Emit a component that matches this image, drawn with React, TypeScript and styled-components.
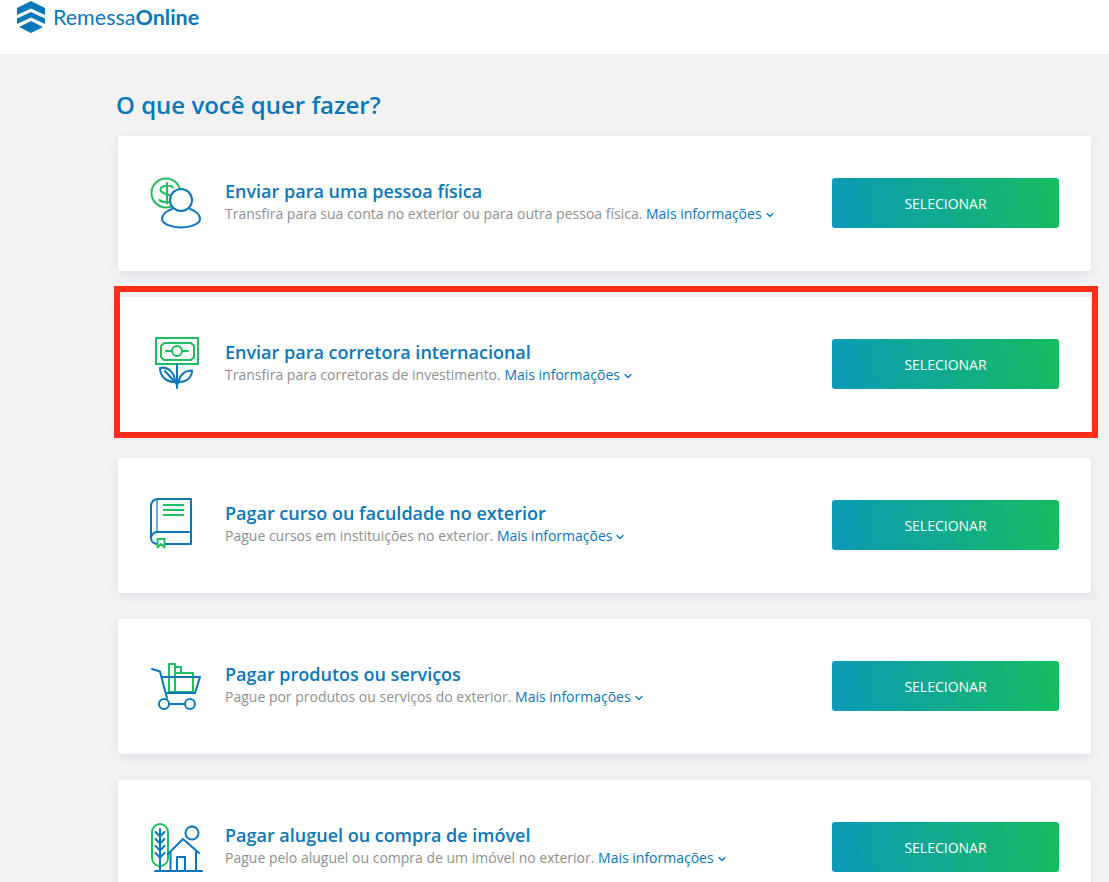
import { ReactNode } from 'react';
import styled, { createGlobalStyle } from 'styled-components';
import { ChevronDown } from 'lucide-react';

const BLUE = '#0a77b9';
const GREEN = '#1fbf5f';

const GlobalStyle = createGlobalStyle`
  html, body {
    margin: 0;
    padding: 0;
    height: 882px;
    overflow: hidden;
    background: #f2f2f3;
    font-family: "Open Sans", "Liberation Sans", sans-serif;
  }
`;

const LogoMark = () => (
  <svg width="30" height="34" viewBox="0 0 30 34">
    <g fill={BLUE}>
      <polygon points="15,1 29,8 29,15 15,8.5 1,15 1,8" />
      <polygon points="15,12 29,18.5 29,24 15,17.5 1,24 1,18.5" />
      <polygon points="15,21 27,27 15,33 3,27" />
    </g>
  </svg>
);

const IconSvg = ({ children }: { children: ReactNode }) => (
  <svg
    width="60"
    height="60"
    viewBox="0 0 60 60"
    fill="none"
    strokeWidth="2"
    strokeLinecap="round"
    strokeLinejoin="round"
  >
    {children}
  </svg>
);

const PersonIcon = () => (
  <IconSvg>
    <g stroke={GREEN}>
      <circle cx="20" cy="19" r="14.5" />
      <path d="M27 13.500C25 11 15 10.500 14.500 15.500C14 21 27 19 27 25C27 29 17 29.500 13.500 26" />
      <path d="M21 9V29.500" />
    </g>
    <g stroke={BLUE}>
      <path
        fill="#fff"
        d="M26 35C20 37 16 41 16 45C16 50 26 53.500 35 53.500C44 53.500 54 50 54 45C54 41 50 37 44 35"
      />
      <circle cx="35" cy="26" r="11" fill="#fff" />
    </g>
  </IconSvg>
);

const PlantIcon = () => (
  <IconSvg>
    <g stroke={GREEN}>
      <rect x="10" y="3" width="42" height="26" strokeLinejoin="miter" />
      <path d="M18 8H45L48 11V22L45 25H18L15 22V11Z" />
      <circle cx="31" cy="16" r="5" />
      <path d="M20 16H26M36 16H42" />
    </g>
    <g stroke={BLUE}>
      <path d="M31 29V53" />
      <path d="M29 47C21 47 14 42 14 33C22 31 29 38 29 47Z" />
      <path d="M19 36L28 46" />
      <path d="M33 47C33 41 38 35.500 46 35.500C46 42 41 47 33 47Z" />
      <path d="M29 47L31 50L33 47" />
    </g>
  </IconSvg>
);

const BookIcon = () => (
  <IconSvg>
    <g stroke={BLUE} strokeLinecap="butt">
      <path d="M45 3H12C8 3 5 6 5 10V42C5 45.500 8 48 11 48H45V3Z" />
      <path d="M5 42C5 39 8 36 11 36H45" />
      <path d="M11 3V36" strokeOpacity="0.6" />
    </g>
    <g stroke={GREEN} strokeLinecap="butt">
      <path d="M17 9H38M17 14H38M17 19H38" />
      <path fill="#fff" d="M11.500 43H18.500V51.500L15 48L11.500 51.500Z" />
    </g>
  </IconSvg>
);

const CartIcon = () => (
  <IconSvg>
    <g stroke={GREEN} strokeLinecap="butt">
      <rect x="23" y="7" width="6" height="28" />
      <rect x="29" y="10" width="6" height="6" />
      <rect x="29" y="16" width="18" height="19" />
    </g>
    <g stroke={BLUE}>
      <path d="M6 12L14 14.500L21 41" />
      <path d="M16 20H54L49 36H20" />
      <circle cx="18" cy="47" r="5" />
      <circle cx="44" cy="47" r="5" />
      <path d="M23 47H39" />
    </g>
  </IconSvg>
);

const HouseIcon = () => (
  <IconSvg>
    <rect x="6" y="6" width="16" height="42" rx="8" stroke={GREEN} />
    <g stroke={BLUE}>
      <path d="M14 11V53M9 53H56" />
      <path d="M9.500 14L14 18.500L18.500 14M9.500 21L14 25.500L18.500 21M9.500 28L14 32.500L18.500 28M9.500 35L14 39.500L18.500 35" />
      <circle cx="46" cy="15" r="6.500" />
      <path d="M22 36L37 21L53 35" />
      <path d="M24.500 34V53M50 34V53" />
      <path d="M31 53V39H39V53" />
    </g>
  </IconSvg>
);

const options = [
  {
    icon: <PersonIcon />,
    title: 'Enviar para uma pessoa física',
    text: 'Transfira para sua conta no exterior ou para outra pessoa física.',
  },
  {
    icon: <PlantIcon />,
    title: 'Enviar para corretora internacional',
    text: 'Transfira para corretoras de investimento.',
    highlighted: true,
  },
  {
    icon: <BookIcon />,
    title: 'Pagar curso ou faculdade no exterior',
    text: 'Pague cursos em instituições no exterior.',
  },
  {
    icon: <CartIcon />,
    title: 'Pagar produtos ou serviços',
    text: 'Pague por produtos ou serviços do exterior.',
  },
  {
    icon: <HouseIcon />,
    title: 'Pagar aluguel ou compra de imóvel',
    text: 'Pague pelo aluguel ou compra de um imóvel no exterior.',
  },
];

function App() {
  return (
    <Page>
      <GlobalStyle />
      <Header>
        <LogoMark />
        <LogoText>
          Remessa<b>Online</b>
        </LogoText>
      </Header>
      <Main>
        <Heading>O que você quer fazer?</Heading>
        <CardList>
          {options.map((option) => (
            <Card key={option.title} $highlighted={option.highlighted}>
              <IconBox>{option.icon}</IconBox>
              <CardBody>
                <CardTitle>{option.title}</CardTitle>
                <CardText>
                  {option.text}{' '}
                  <MoreLink>
                    Mais informações
                    <ChevronDown size={12} strokeWidth={2.6} />
                  </MoreLink>
                </CardText>
              </CardBody>
              <SelectButton>SELECIONAR</SelectButton>
            </Card>
          ))}
        </CardList>
      </Main>
    </Page>
  );
}

const Page = styled.div`
  height: 882px;
  overflow: hidden;
`;

const Header = styled.header`
  height: 55px;
  box-sizing: border-box;
  background: #fff;
  border-bottom: 1px solid #e0edf3;
  display: flex;
  align-items: flex-start;
  gap: 7px;
  padding-left: 16px;
`;

const LogoText = styled.div`
  font-family: "Lato", "Open Sans", sans-serif;
  font-size: 21.5px;
  line-height: 26px;
  margin-top: 4px;
  color: ${BLUE};
  font-weight: 400;

  b {
    font-weight: 700;
  }
`;

const Main = styled.main`
  padding: 0 18px 0 118px;
`;

const Heading = styled.h1`
  margin: 33px 0 14px -2px;
  font-size: 24px;
  line-height: 34px;
  font-weight: 600;
  color: ${BLUE};
`;

const CardList = styled.div`
  display: flex;
  flex-direction: column;
  gap: 26px;
`;

const Card = styled.section<{ $highlighted?: boolean }>`
  position: relative;
  height: 135px;
  box-sizing: border-box;
  background: #fff;
  border-radius: 3px;
  box-shadow: 0 3px 10px rgba(190, 205, 215, 0.45);
  display: flex;
  align-items: flex-start;
  padding: 38px 32px 0 28px;

  ${({ $highlighted }) =>
    $highlighted &&
    `
    &::after {
      content: '';
      position: absolute;
      top: -11px;
      left: -4px;
      right: -7px;
      bottom: -6px;
      border: 6px solid #ff2d1a;
      pointer-events: none;
    }
  `}
`;

const IconBox = styled.div`
  width: 60px;
  height: 60px;
  flex-shrink: 0;
`;

const CardBody = styled.div`
  flex: 1;
  padding: 5px 0 0 19px;
`;

const CardTitle = styled.h2`
  margin: 0;
  font-size: 18px;
  line-height: 24px;
  font-weight: 600;
  color: ${BLUE};
`;

const CardText = styled.p`
  margin: 1px 0 0;
  font-size: 14px;
  line-height: 19px;
  color: #8f8f8f;
`;

const MoreLink = styled.a`
  color: ${BLUE};
  display: inline-flex;
  align-items: center;
  gap: 2px;

  svg {
    margin-top: 2px;
  }
`;

const SelectButton = styled.button`
  width: 227px;
  height: 50px;
  margin-top: 4px;
  flex-shrink: 0;
  border: 0;
  border-radius: 3px;
  background: linear-gradient(80deg, #0c9ab8 0%, #14bd5e 100%);
  color: #fff;
  font-family: inherit;
  font-size: 14px;
  font-weight: 400;
`;

export default App;
